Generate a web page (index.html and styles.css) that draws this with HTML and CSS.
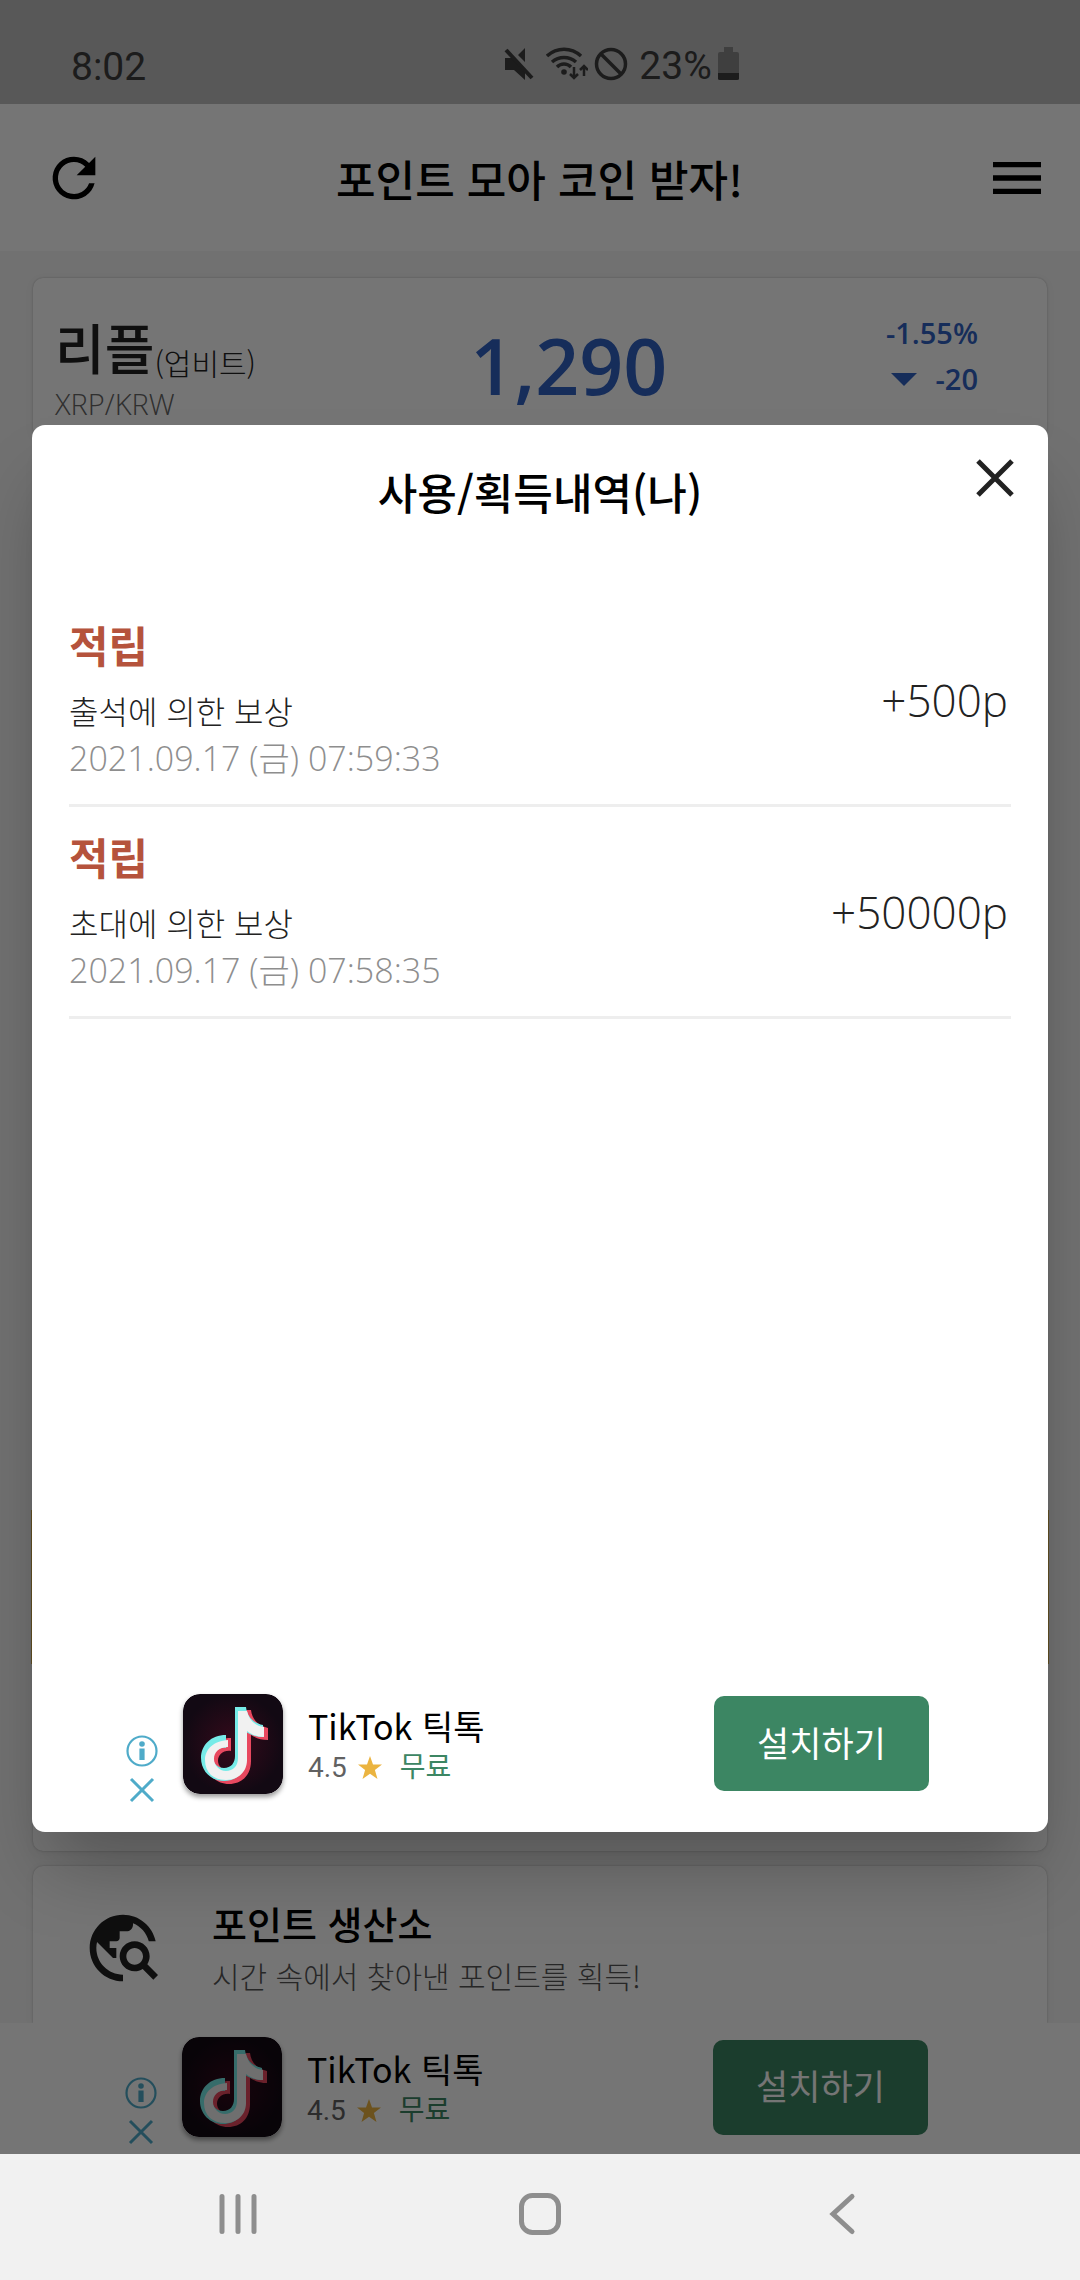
FILE: index.html
```html
<!DOCTYPE html>
<html lang="ko">
<head>
<meta charset="utf-8">
<meta name="viewport" content="width=device-width, initial-scale=1">
<title>포인트 모아 코인 받자!</title>
<link rel="stylesheet" href="styles.css">
</head>
<body>
<svg class="defs" aria-hidden="true">
  <defs>
    <radialGradient id="tile"><stop offset="0" stop-color="#360a1b"/><stop offset="1" stop-color="#120913"/></radialGradient>
    <path id="note" d="M54 15h11c1 9 7 16 17 18v12c-7 0-12-2-17-5v26c0 14-9 23-22 23S20 79 20 66s10-23 25-23v13c-8-1-13 4-13 10 0 5 5 10 11 10 7 0 11-5 11-12z"/>
    <symbol id="tiktok" viewBox="0 0 100 100">
      <rect width="100" height="100" rx="17" fill="url(#tile)"/>
      <use href="#note" x="3" y="1" fill="#e8485f"/>
      <use href="#note" x="-2" y="-2" fill="#77ebe8"/>
      <path fill="#f1f1f1" d="M55 17h9c2 9 8 15 17 16v10c-6 0-12-2-17-6v29c0 12-9 20-21 20s-21-7-21-20c0-11 9-19 23-20v7c-9 0-14 5-14 12 0 6 5 12 12 12s12-5 12-13z"/>
    </symbol>
    <symbol id="adinfo" viewBox="0 0 32 32">
      <circle cx="16" cy="16" r="14.500" fill="none" stroke="#4fabc9" stroke-width="2.200"/>
      <circle cx="16" cy="9" r="2.800" fill="#4fabc9"/><path fill="#4fabc9" d="M13.400 13.500h5.200V25h-5.200z"/>
    </symbol>
    <symbol id="adclose" viewBox="0 0 32 32"><path d="M5 5l22 22M27 5L5 27" fill="none" stroke="#4fabc9" stroke-width="3"/></symbol>
    <symbol id="star" viewBox="0 0 24 24"><path fill="#ebb440" d="M12 0l3 8.400 9 .2-7.100 5.400L19.500 23 12 17.700 4.500 23l2.600-9L0 8.600l9-.2z"/></symbol>
  </defs>
</svg>

<div class="app">
  <div class="status">
    <span class="clock">8:02</span>
    <div class="indicators">
      <svg width="30" height="34" viewBox="0 0 30 34"><path fill="#3d3d3d" d="M1 11h7l13 13v9L10 23H1zM14 8l7-7v14z"/><path d="M2 3l26 28" stroke="#3d3d3d" stroke-width="4"/></svg>
      <svg class="wifi" width="42" height="34" viewBox="0 0 42 34" fill="none" stroke="#3d3d3d" stroke-width="3.500"><path d="M1 9c10-9 24-9 34 0M6 15c7-6 17-6 24 0M11 20c4-4 10-4 14 0"/><circle cx="18" cy="25" r="2.800" fill="#3d3d3d" stroke="none"/><path stroke-width="2.500" d="M28 20v10M24 27l4 4 4-4M38 29V20M34 23l4-4 4 4"/></svg>
      <svg width="34" height="34" viewBox="0 0 34 34" fill="none" stroke="#3d3d3d" stroke-width="3.500"><circle cx="17" cy="17" r="14.500"/><path d="M7 7l20 20"/></svg>
      <span class="percent">23%</span>
      <svg width="21" height="34" viewBox="0 0 21 34"><path fill="#8a8a8a" d="M6 0h9v5H6zM2 5h17q2 0 2 2v19H0V7q0-2 2-2z"/><path fill="#3d3d3d" d="M0 26h21v6q0 1-2 1H2q-2 0-2-1z"/></svg>
    </div>
  </div>

  <header class="topbar">
    <button class="icon-button" aria-label="새로고침"><svg width="64" height="64" viewBox="0 0 24 24"><path d="M17.650 6.350A7.960 7.960 0 0 0 12 4a8 8 0 1 0 7.730 10h-2.080A6 6 0 1 1 12 6c1.660 0 3.140.69 4.220 1.780L13 11h7V4z"/></svg></button>
    <h1>포인트 모아 코인 받자!</h1>
    <button class="icon-button" aria-label="메뉴"><svg width="64" height="64" viewBox="0 0 24 24"><path d="M3 18h18v-2H3zm0-5h18v-2H3zm0-7v2h18V6z"/></svg></button>
  </header>

  <main>
    <section class="card quote">
      <div class="coin">
        <div><b>리플</b><span>(업비트)</span></div>
        <small>XRP/KRW</small>
      </div>
      <strong class="price">1,290</strong>
      <div class="change">
        <span>-1.55%</span>
        <span class="delta"><svg width="26" height="13" viewBox="0 0 26 13"><path fill="currentColor" d="M0 0h26L13 13z"/></svg>-20</span>
      </div>
    </section>
    <section class="card feed"><div class="banner"></div></section>
    <section class="card factory">
      <svg width="80" height="80" viewBox="0 0 24 24"><path fill="#222" d="M19.300 16.900c.4-.7.7-1.500.7-2.400 0-2.500-2-4.500-4.500-4.500S11 12 11 14.500s2 4.500 4.500 4.500c.9 0 1.700-.3 2.400-.7l3.200 3.200 1.400-1.400zM15.500 17c-1.400 0-2.500-1.100-2.500-2.500s1.100-2.500 2.500-2.500 2.500 1.100 2.500 2.500-1.100 2.500-2.500 2.500zM12 20v2C6.480 22 2 17.520 2 12S6.480 2 12 2c4.840 0 8.870 3.440 9.800 8h-2.070c-.64-2.460-2.400-4.470-4.730-5.410V5c0 1.100-.9 2-2 2h-2v2c0 .55-.45 1-1 1H8v2h2v3H9l-4.790-4.790C4.080 10.790 4 11.380 4 12c0 4.410 3.590 8 8 8z"/></svg>
      <div>
        <h2>포인트 생산소</h2>
        <p>시간 속에서 찾아낸 포인트를 획득!</p>
      </div>
    </section>
  </main>

  <aside class="ad page-ad">
    <div class="ad-marks"><svg width="32" height="32"><use href="#adinfo"/></svg><svg width="32" height="32"><use href="#adclose"/></svg></div>
    <svg class="ad-icon" width="100" height="100"><use href="#tiktok"/></svg>
    <div class="ad-text">
      <div class="ad-name">TikTok 틱톡</div>
      <div class="ad-meta"><span>4.5</span><svg width="24" height="24"><use href="#star"/></svg><span class="free">무료</span></div>
    </div>
    <button class="install">설치하기</button>
  </aside>

  <div class="scrim">
    <div class="dialog" role="dialog" aria-modal="true" aria-labelledby="dialog-title">
      <div class="dialog-head">
        <h2 id="dialog-title">사용/획득내역(나)</h2>
        <button class="close" aria-label="닫기"><svg width="38" height="38" viewBox="0 0 38 38"><path d="M2 2l34 34M36 2L2 36" stroke="#222" stroke-width="5"/></svg></button>
      </div>
      <ul class="history">
        <li>
          <div class="entry"><b>적립</b><span>출석에 의한 보상</span><time>2021.09.17 (금) 07:59:33</time></div>
          <span class="points">+500p</span>
        </li>
        <li>
          <div class="entry"><b>적립</b><span>초대에 의한 보상</span><time>2021.09.17 (금) 07:58:35</time></div>
          <span class="points">+50000p</span>
        </li>
      </ul>
      <aside class="ad">
        <div class="ad-marks"><svg width="32" height="32"><use href="#adinfo"/></svg><svg width="32" height="32"><use href="#adclose"/></svg></div>
        <svg class="ad-icon" width="100" height="100"><use href="#tiktok"/></svg>
        <div class="ad-text">
          <div class="ad-name">TikTok 틱톡</div>
          <div class="ad-meta"><span>4.5</span><svg width="24" height="24"><use href="#star"/></svg><span class="free">무료</span></div>
        </div>
        <button class="install">설치하기</button>
      </aside>
    </div>
  </div>
</div>

<nav class="system-nav">
  <button aria-label="최근 앱"><svg width="40" height="44" viewBox="0 0 40 44" stroke="#8e8e8e" stroke-width="5" stroke-linecap="round"><path d="M4 4.500v35M20 4.500v35M36 4.500v35"/></svg></button>
  <button aria-label="홈"><svg width="44" height="44" viewBox="0 0 44 44"><rect x="3.500" y="3.500" width="37" height="37" rx="11" fill="none" stroke="#8e8e8e" stroke-width="5"/></svg></button>
  <button aria-label="뒤로"><svg width="44" height="44" viewBox="0 0 44 44"><path d="M32 4.500L13 22l19 17.500" fill="none" stroke="#8e8e8e" stroke-width="5" stroke-linecap="round"/></svg></button>
</nav>
</body>
</html>
```

FILE: styles.css
```css
* { box-sizing: border-box; margin: 0; padding: 0; }

body {
  display: flex;
  flex-direction: column;
  min-height: 100vh;
  font-family: "Open Sans", "Noto Sans CJK KR", sans-serif;
  color: #222;
  background: #f5f5f5;
}

button { border: 0; background: none; font: inherit; cursor: pointer; }
svg { display: block; flex: none; }
.defs { position: absolute; width: 0; height: 0; }

.app {
  position: relative;
  flex: 1;
  display: flex;
  flex-direction: column;
  background: #f6f6f6;
}

/* Status bar */
.status {
  display: grid;
  grid-template-columns: 1fr auto 1fr;
  align-items: end;
  height: 104px;
  padding: 0 71px 17px;
  background: #c0c0c0;
  font: 39px/40px Roboto, sans-serif;
  color: #3d3d3d;
}
.indicators { display: flex; align-items: center; gap: 6px; height: 43px; margin-left: 163px; }
.indicators svg { margin-bottom: 4px; }
.indicators .wifi { margin-left: 6px; }
.percent { margin-left: 5px; }

/* Title bar */
.topbar {
  display: grid;
  grid-template-columns: 1fr auto 1fr;
  align-items: center;
  height: 147px;
  padding: 0 31px 0 42px;
  background: #fff;
  color: #000;
}
.topbar h1 { padding-right: 12px; font: 500 43px/60px "Noto Sans CJK KR", sans-serif; }
.icon-button { width: 64px; height: 64px; }
.icon-button:last-child { justify-self: end; }

/* Page content */
main {
  flex: 1;
  display: flex;
  flex-direction: column;
  gap: 15px;
  padding: 27px 33px 0;
}
.card {
  border-radius: 10px;
  background: #fff;
  box-shadow: 0 0 2px rgba(0, 0, 0, .25), 0 2px 10px rgba(0, 0, 0, .06);
}
.quote {
  display: grid;
  grid-template-columns: 45% auto 1fr;
  height: 160px;
  padding: 32px 69px 0 22px;
}
.coin div { display: flex; align-items: flex-end; height: 74px; }
.coin b { font: 500 54px/74px "Noto Sans CJK KR", sans-serif; }
.coin span { font: 300 30px/44px "Noto Sans CJK KR", sans-serif; }
.coin small { display: block; font-size: 29px; line-height: 40px; font-weight: 300; color: #666; }
.price { padding-top: 8px; font-size: 77px; line-height: 96px; font-weight: 600; color: #3162c4; }
.change {
  display: flex;
  flex-direction: column;
  align-items: flex-end;
  font-size: 29px;
  line-height: 46px;
  font-weight: 600;
  color: #3162c4;
}
.delta { display: flex; align-items: center; gap: 19px; }
.feed { flex: 1; display: flex; flex-direction: column; justify-content: flex-end; padding-bottom: 187px; }
.banner { height: 154px; margin: 0 -2px; background: #cfa94a; }
.factory {
  display: flex;
  gap: 49px;
  height: 157px;
  padding: 32px 50px 0;
  border-radius: 10px 10px 0 0;
}
.factory svg { margin-top: 10px; }
.factory h2 { font: 500 38px/50px "Noto Sans CJK KR", sans-serif; color: #000; }
.factory p { font: 300 30px/54px "Noto Sans CJK KR", sans-serif; color: #555; }

/* Install banner */
.ad {
  display: flex;
  align-items: center;
  height: 131px;
  padding: 0 119px 0 94px;
  background: #fff;
}
.ad-marks { align-self: flex-end; display: flex; flex-direction: column; gap: 7px; padding-bottom: 3px; }
.ad-icon { margin: 0 25px; border-radius: 17px; box-shadow: 0 3px 5px rgba(0, 0, 0, .4); }
.ad-text { flex: 1; padding-top: 4px; }
.ad-name { font: 34px/44px "Noto Sans CJK KR", sans-serif; color: #000; }
.ad-meta { display: flex; align-items: center; font: 28px/40px Roboto, "Noto Sans CJK KR", sans-serif; color: #616161; }
.ad-meta svg { margin: 0 18px 0 11px; }
.free { color: #3c8663; }
.install {
  width: 215px;
  height: 95px;
  padding-bottom: 4px;
  border-radius: 10px;
  background: #3c8663;
  color: #fff;
  font: 35px/50px "Noto Sans CJK KR", sans-serif;
}
.page-ad { padding: 0 152px 3px 125px; }

/* History dialog */
.scrim {
  position: absolute;
  inset: 0;
  display: flex;
  padding: 425px 32px 322px;
  background: rgba(0, 0, 0, .54);
}
.dialog {
  flex: 1;
  display: flex;
  flex-direction: column;
  padding-bottom: 23px;
  border-radius: 13px;
  background: #fff;
  box-shadow: 0 48px 70px -16px rgba(0, 0, 0, .28);
}
.dialog-head { position: relative; padding-top: 36px; text-align: center; }
.dialog-head h2 { font: 500 43px/60px "Noto Sans CJK KR", sans-serif; color: #000; }
.close { position: absolute; top: 34px; right: 34px; width: 38px; height: 38px; }
.history { flex: 1; padding: 74px 37px 0; list-style: none; }
.history li {
  display: flex;
  align-items: center;
  justify-content: space-between;
  height: 212px;
  padding-right: 3px;
  border-bottom: 3px solid #eee;
}
.entry { display: flex; flex-direction: column; padding-bottom: 4px; }
.entry b { margin-bottom: 12px; font: 700 43px/60px "Noto Sans CJK KR", sans-serif; color: #b5533c; }
.entry span { font: 300 32px/48px "Noto Sans CJK KR", sans-serif; }
.entry time { font-size: 34px; line-height: 48px; font-weight: 300; color: #8e8e8e; }
.points { font-size: 44px; line-height: 60px; font-weight: 300; }

/* System navigation */
.system-nav {
  display: flex;
  justify-content: center;
  align-items: center;
  height: 126px;
  gap: 214px;
  padding-bottom: 7px;
  background: #f1f1f1;
}
.system-nav button { width: 88px; display: flex; justify-content: center; }
```
